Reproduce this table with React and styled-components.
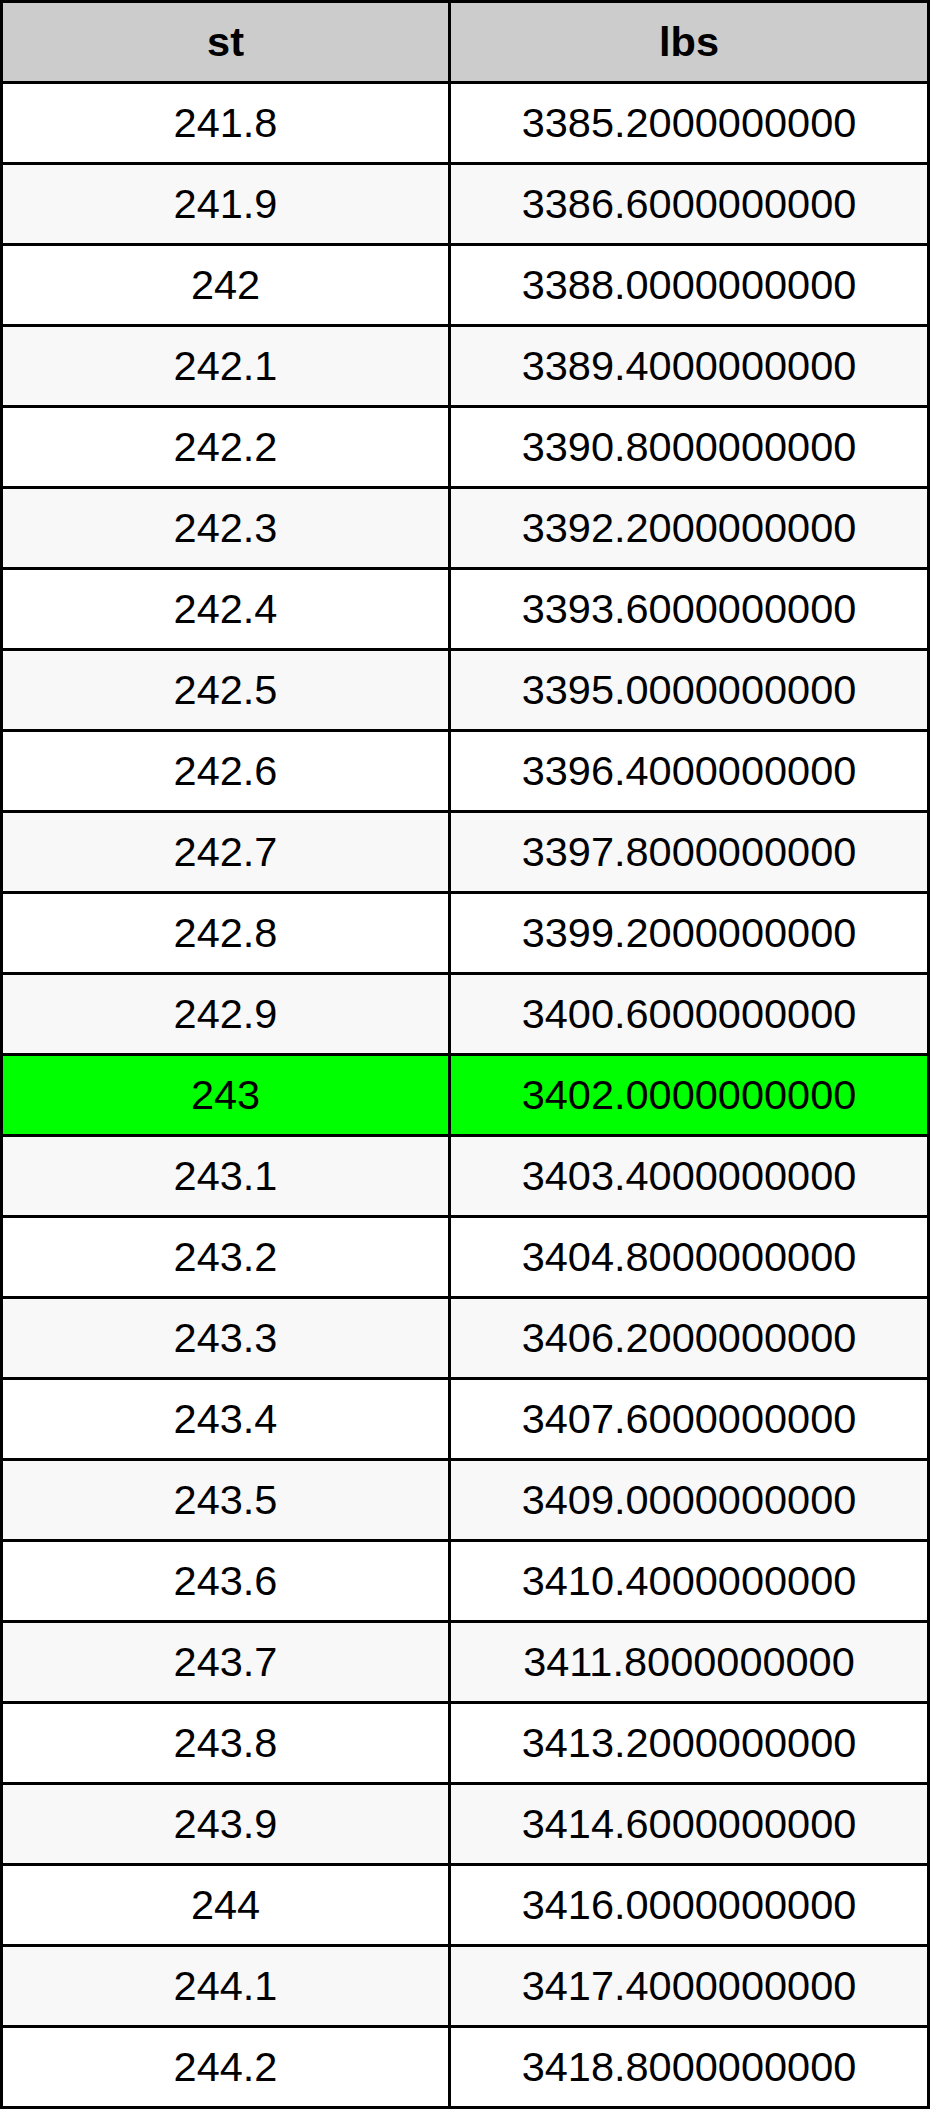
import React from "react";
import styled, { createGlobalStyle } from "styled-components";

const GlobalStyle = createGlobalStyle`
  html, body {
    margin: 0;
    padding: 0;
    background: #ffffff;
  }
  body {
    font-family: "Liberation Sans", Arial, Helvetica, sans-serif;
  }
`;

const Table = styled.div`
  display: grid;
  grid-template-columns: 445px 476px;
  grid-auto-rows: 78px;
  gap: 3px;
  padding: 3px;
  width: 930px;
  box-sizing: border-box;
  background: #000000;
`;

const Cell = styled.div`
  display: flex;
  align-items: center;
  justify-content: center;
  font-size: 41.5px;
  color: #000000;
  font-weight: ${(p) => (p.$head ? 700 : 400)};
  background: ${(p) =>
    p.$head
      ? "#cccccc"
      : p.$highlight
      ? "#00ff00"
      : p.$odd
      ? "#f8f8f8"
      : "#ffffff"};
`;

// tenths of a stone, 241.8 .. 244.2
const rows = [];
for (let t = 2418; t <= 2442; t++) {
  rows.push({ st: String(t / 10), lbs: ((t * 14) / 10).toFixed(10), t });
}

export default function App() {
  return (
    <>
      <GlobalStyle />
      <Table>
        <Cell $head>st</Cell>
        <Cell $head>lbs</Cell>
        {rows.map((r, i) => (
          <React.Fragment key={r.t}>
            <Cell $odd={i % 2 === 1} $highlight={r.t === 2430}>
              {r.st}
            </Cell>
            <Cell $odd={i % 2 === 1} $highlight={r.t === 2430}>
              {r.lbs}
            </Cell>
          </React.Fragment>
        ))}
      </Table>
    </>
  );
}
